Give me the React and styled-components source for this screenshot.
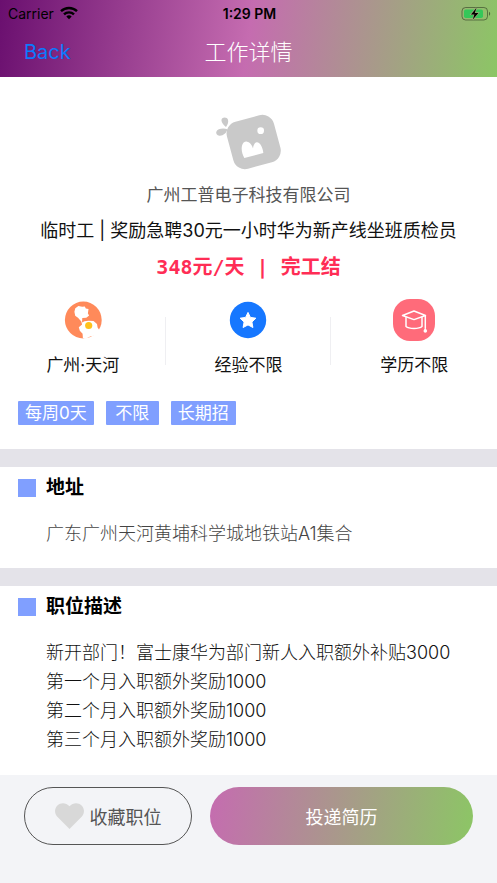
import React, { useState } from "react";
import styled, { createGlobalStyle } from "styled-components";

const GlobalStyle = createGlobalStyle`
  * {
    box-sizing: border-box;
  }
  body {
    margin: 0;
    background: #ffffff;
    color: #111111;
    font-family: Inter, "Noto Sans CJK SC", sans-serif;
  }
  h1, h2, p, ul {
    margin: 0;
    padding: 0;
  }
`;

const Screen = styled.div`
  display: flex;
  flex-direction: column;
  min-height: 100vh;
`;

const Header = styled.header`
  background: linear-gradient(98deg, #6a0f6f, #c56cb0 50%, #8cc665);
`;

const StatusBar = styled.div`
  display: grid;
  grid-template-columns: 1fr auto 1fr;
  align-items: center;
  height: 26px;
  padding: 0 6px 0 8px;
  color: #000000;
  font-size: 14px;
`;

const Carrier = styled.div`
  display: flex;
  align-items: center;
  gap: 6px;
`;

const Clock = styled.time`
  font-weight: 600;
`;

const Battery = styled.div`
  display: flex;
  justify-content: flex-end;
`;

const NavBar = styled.nav`
  display: grid;
  grid-template-columns: 1fr auto 1fr;
  align-items: center;
  height: 51px;
  padding: 0 24px;
`;

const BackButton = styled.button`
  justify-self: start;
  padding: 0;
  border: 0;
  background: none;
  color: #0a7aff;
  font-family: inherit;
  font-size: 20px;
  cursor: pointer;
`;

const NavTitle = styled.h1`
  color: #ffffff;
  font-size: 22px;
  font-weight: 300;
  line-height: 32px;
`;

const Content = styled.main`
  display: flex;
  flex: 1;
  flex-direction: column;
  gap: 18px;
  background: #e4e3e9;
`;

const Summary = styled.section`
  display: flex;
  flex-direction: column;
  align-items: center;
  padding: 36px 0 24px;
  background: #ffffff;
`;

const Company = styled.p`
  margin-top: 12px;
  color: #555555;
  font-size: 17px;
  line-height: 24px;
`;

const JobTitle = styled.h2`
  margin-top: 12px;
  font-size: 18px;
  font-weight: 400;
  line-height: 24px;
`;

const Salary = styled.p`
  margin-top: 12px;
  color: #ff2d55;
  font-family: "DejaVu Sans Mono", "Noto Sans CJK SC", monospace;
  font-size: 20px;
  font-weight: 700;
  line-height: 24px;
`;

const Facts = styled.ul`
  display: grid;
  grid-template-columns: repeat(3, 1fr);
  width: 100%;
  margin-top: 20px;
  list-style: none;
`;

const Fact = styled.li`
  display: flex;
  flex-direction: column;
  align-items: center;
  gap: 12px;
  font-size: 17px;
  line-height: 24px;
  background: linear-gradient(#efeff2, #efeff2) right 18px / 1px 48px no-repeat;

  &:last-child {
    background: none;
  }
`;

const Tags = styled.ul`
  display: flex;
  flex-wrap: wrap;
  gap: 12px;
  width: 100%;
  margin-top: 24px;
  padding: 0 18px;
  list-style: none;
`;

const Tag = styled.li`
  min-width: 53px;
  padding: 0 7px;
  border-radius: 1px;
  background: #809fff;
  color: #ffffff;
  font-size: 17px;
  line-height: 24px;
  text-align: center;
`;

const Panel = styled.section`
  flex-grow: ${(props) => (props.$grow ? 1 : 0)};
  padding: 8px 18px 20px;
  background: #ffffff;
`;

const PanelTitle = styled.h2`
  display: flex;
  align-items: center;
  gap: 10px;
  color: #000000;
  font-size: 19px;
  font-weight: 700;
  line-height: 26px;

  &::before {
    content: "";
    width: 18px;
    height: 18px;
    background: #809fff;
  }
`;

const PanelText = styled.p`
  margin-top: 18px;
  padding-left: 28px;
  color: ${(props) => (props.$muted ? "#444444" : "#111111")};
  font-size: 18px;
  font-weight: 300;
  line-height: 29px;
  white-space: pre-line;
`;

const Footer = styled.footer`
  display: flex;
  gap: 18px;
  padding: 12px 24px 38px;
  background: #f3f4f7;
`;

const ActionButton = styled.button`
  display: flex;
  flex: ${(props) => (props.$primary ? "1" : "0 0 168px")};
  align-items: center;
  justify-content: center;
  gap: 6px;
  height: 58px;
  border: ${(props) => (props.$primary ? "0" : "1px solid #555555")};
  border-radius: 29px;
  background: ${(props) =>
    props.$primary ? "linear-gradient(98deg, #c56cb0, #8cc665)" : "none"};
  color: ${(props) => (props.$primary ? "#ffffff" : "#555555")};
  font-family: inherit;
  font-size: 18px;
  cursor: pointer;
`;

const WifiIcon = () => (
  <svg width="18" height="14" viewBox="0 0 18 14" aria-hidden="true">
    <g fill="none" stroke="#000" strokeWidth="2.4">
      <path d="M1 5.2a11.5 11.5 0 0 1 16 0" />
      <path d="M4 8.4a7.2 7.2 0 0 1 10 0" />
    </g>
    <path d="M9 13.2 6.3 10.5a3.9 3.9 0 0 1 5.4 0z" />
  </svg>
);

const BatteryIcon = () => (
  <svg width="30" height="15" viewBox="0 0 30 15" aria-hidden="true">
    <rect x="1" y="1.5" width="25.5" height="12.5" rx="3.6" fill="none" stroke="#000" strokeOpacity=".4" />
    <rect x="3" y="3.5" width="19" height="8.5" rx="1.8" fill="#34c759" />
    <path d="M28 5.7c1.6.6 1.6 3.5 0 4.1z" fillOpacity=".45" />
    <path d="M15.4 2 10 8.4h3.4L11.8 13.5l5.6-6.6h-3.6z" stroke="#9aa878" strokeWidth="1.4" paintOrder="stroke" />
  </svg>
);

const CompanyLogo = () => (
  <svg width="67" height="58" viewBox="45 25 201 174" role="img" aria-label="公司">
    <g fill="#c9c9c9">
      <rect x="88" y="39" width="146" height="146" rx="36" transform="rotate(-15 161 112)" />
      <path d="M78 67C66 58 61 46 67 41c5-5 15-3 17 4 2 8-1 15-6 22z" />
      <path d="M82 74c-2 12-13 20-24 19-7-1-11-7-9-12 3-8 20-12 33-7z" />
    </g>
    <g fill="#fff">
      <circle cx="182" cy="78" r="10" />
      <path d="M133 160c-6-11-10-25-7-37 2-8 8-13 15-12 9 1 16 12 18 20 1-9 5-17 11-18 10-1 19 17 20 32z" />
    </g>
  </svg>
);

const PlaceIcon = () => (
  <svg width="42" height="42" viewBox="0 0 42 42" aria-hidden="true">
    <circle cx="21.3" cy="21" r="18.4" fill="#ff8a5a" />
    <path
      fill="#fff"
      d="M13.3 9.2 16.4 7l3.8.8 2.6-.3 1 2 2.7.6-.6 4.3 1.2 2-2.8 2.4-4 .3-.3 4.5 2.5-1.4 4-.5 5 .2 3.5 3.1.6 3.4 2.2 3.4-.6 3-4.4 1.6-4.7 1.1-4.8 2.4-2.4-.6-.3-4.5-2.8-3-1-3.6 3.3-2.6-.8-3-3.3-3.8-2.8-2-.8-4z"
    />
    <circle cx="26.7" cy="26.5" r="3.6" fill="#ffc21c" />
  </svg>
);

const StarIcon = () => (
  <svg width="42" height="42" viewBox="0 0 42 42" aria-hidden="true">
    <circle cx="21" cy="21" r="18.2" fill="#1677ff" />
    <path
      fill="#fff"
      stroke="#fff"
      strokeLinejoin="round"
      d="m21 13.4 2.4 5 5.5.8-4 3.8 1 5.5-4.9-2.6-4.9 2.6 1-5.5-4-3.8 5.5-.8z"
    />
  </svg>
);

const DegreeIcon = () => (
  <svg width="42" height="42" viewBox="0 0 42 42" aria-hidden="true">
    <rect width="42" height="42" rx="17" fill="#ff6b7a" />
    <g fill="none" stroke="#fff" strokeWidth="1.5" strokeLinejoin="round" strokeLinecap="round">
      <path d="M9.5 16.5 21 12l11.5 4.5L21 20.6z" />
      <path d="M13 18.5v9c3 2.6 13 2.6 16 0v-9M32.3 17v12" />
    </g>
    <path d="m32.3 28.5 1.8 3.3c0 2.6-3.6 2.6-3.6 0z" fill="#fff" />
  </svg>
);

const HeartIcon = ({ active }) => (
  <svg width="29" height="26" viewBox="0 0 29 26" aria-hidden="true">
    <path
      fill={active ? "#ff2d55" : "#d8d8d8"}
      d="M14.5 26 2.3 13.8C-.8 10.500-.7 5.400 2.400 2.400c3.300-3.200 8.600-3.100 12.100.8 3.500-3.900 8.800-4 12.100-.8 3.100 3 3.200 8.100.1 11.400z"
    />
  </svg>
);

const facts = [
  { label: "广州·天河", Icon: PlaceIcon },
  { label: "经验不限", Icon: StarIcon },
  { label: "学历不限", Icon: DegreeIcon },
];

const tags = ["每周0天", "不限", "长期招"];

const description = [
  "新开部门！富士康华为部门新人入职额外补贴3000",
  "第一个月入职额外奖励1000",
  "第二个月入职额外奖励1000",
  "第三个月入职额外奖励1000",
].join("\n");

export default function App() {
  const [saved, setSaved] = useState(false);

  return (
    <>
      <GlobalStyle />
      <Screen>
        <Header>
          <StatusBar>
            <Carrier>
              Carrier
              <WifiIcon />
            </Carrier>
            <Clock>1:29 PM</Clock>
            <Battery>
              <BatteryIcon />
            </Battery>
          </StatusBar>
          <NavBar>
            <BackButton type="button">Back</BackButton>
            <NavTitle>工作详情</NavTitle>
          </NavBar>
        </Header>

        <Content>
          <Summary>
            <CompanyLogo />
            <Company>广州工普电子科技有限公司</Company>
            <JobTitle>临时工 | 奖励急聘30元一小时华为新产线坐班质检员</JobTitle>
            <Salary>348元/天 | 完工结</Salary>
            <Facts>
              {facts.map(({ label, Icon }) => (
                <Fact key={label}>
                  <Icon />
                  {label}
                </Fact>
              ))}
            </Facts>
            <Tags>
              {tags.map((tag) => (
                <Tag key={tag}>{tag}</Tag>
              ))}
            </Tags>
          </Summary>

          <Panel>
            <PanelTitle>地址</PanelTitle>
            <PanelText $muted>广东广州天河黄埔科学城地铁站A1集合</PanelText>
          </Panel>

          <Panel $grow>
            <PanelTitle>职位描述</PanelTitle>
            <PanelText>{description}</PanelText>
          </Panel>
        </Content>

        <Footer>
          <ActionButton type="button" aria-pressed={saved} onClick={() => setSaved(!saved)}>
            <HeartIcon active={saved} />
            收藏职位
          </ActionButton>
          <ActionButton type="button" $primary>
            投递简历
          </ActionButton>
        </Footer>
      </Screen>
    </>
  );
}
